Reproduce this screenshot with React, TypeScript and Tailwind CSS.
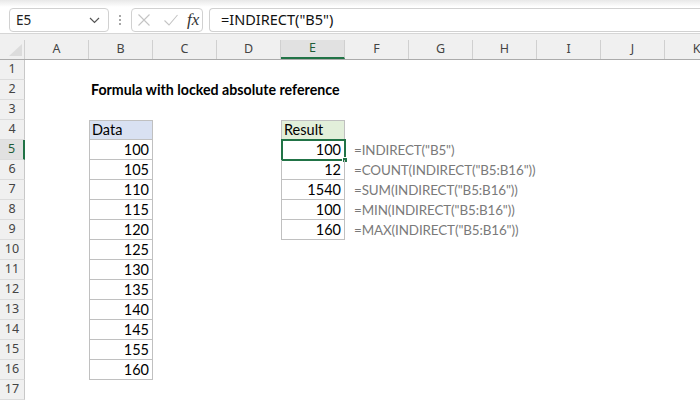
import React from "react";

const COLS = ["A", "B", "C", "D", "E", "F", "G", "H", "I", "J", "K"];
const ROWS = Array.from({ length: 17 }, (_, i) => i + 1);

type Cell = { text: string; kind: "num" | "head" | "title" | "formula"; tone?: "blue" | "green" };

const DATA = [100, 105, 110, 115, 120, 125, 130, 135, 140, 145, 155, 160];

const CELLS: Record<string, Cell> = {
  B2: { text: "Formula with locked absolute reference", kind: "title" },
  B4: { text: "Data", kind: "head", tone: "blue" },
  E4: { text: "Result", kind: "head", tone: "green" },
  E5: { text: "100", kind: "num" },
  E6: { text: "12", kind: "num" },
  E7: { text: "1540", kind: "num" },
  E8: { text: "100", kind: "num" },
  E9: { text: "160", kind: "num" },
  F5: { text: '=INDIRECT("B5")', kind: "formula" },
  F6: { text: '=COUNT(INDIRECT("B5:B16"))', kind: "formula" },
  F7: { text: '=SUM(INDIRECT("B5:B16"))', kind: "formula" },
  F8: { text: '=MIN(INDIRECT("B5:B16"))', kind: "formula" },
  F9: { text: '=MAX(INDIRECT("B5:B16"))', kind: "formula" },
};
DATA.forEach((v, i) => {
  CELLS[`B${i + 5}`] = { text: String(v), kind: "num" };
});

function inTable(col: string, row: number) {
  return (col === "B" && row >= 4 && row <= 16) || (col === "E" && row >= 4 && row <= 9);
}

function SheetCell({ col, row }: { col: string; row: number }) {
  const cell = CELLS[`${col}${row}`];
  const table = inTable(col, row);
  const selected = col === "E" && row === 5;
  return (
    <div
      className={`relative h-5 w-16 shrink-0 ${table ? "border-x border-b border-[#c0c0c0]" : ""} ${
        table && row === 4 ? "border-t" : ""
      } ${cell?.tone === "blue" ? "bg-[#d9e1f2]" : cell?.tone === "green" ? "bg-[#e2efda]" : ""}`}
    >
      {cell && (
        <div
          className={`absolute inset-y-0 whitespace-nowrap leading-[20px] ${
            cell.kind === "num"
              ? "right-[3px] text-[14.5px] text-black"
              : cell.kind === "head"
              ? "left-[2px] text-[14.5px] text-black"
              : cell.kind === "title"
              ? "left-[2px] text-[14.2px] font-bold text-black"
              : "left-[9px] text-[13.4px] tracking-[-0.1px] text-[#7a7a7a]"
          }`}
          style={{ top: table && row === 4 ? -1 : 0 }}
        >
          {cell.text}
        </div>
      )}
      {selected && (
        <div className="absolute -left-px -top-px -right-[2px] -bottom-[2px] border-2 border-[#217346]">
          <div className="absolute -bottom-[4px] -right-[4px] h-[6px] w-[6px] border border-white bg-[#217346]" />
        </div>
      )}
    </div>
  );
}

function FormulaBar() {
  return (
    <div className="relative h-[33px] bg-white">
      <div className="absolute inset-x-0 top-0 h-[7px] bg-gradient-to-b from-[#e8e8e8] to-white" />
      <div className="relative flex h-full items-start pt-[8px]">
        <div className="ml-[9px] flex h-[24px] w-[100px] items-center justify-between rounded-[4px] border border-[#d1d1d1] bg-white pl-[6px] pr-[8px]">
          <span className="text-[13.5px] text-[#222]">E5</span>
          <svg width="11" height="7" viewBox="0 0 11 7" fill="none">
            <path d="M1 1l4.5 4.5L10 1" stroke="#555" strokeWidth="1.2" />
          </svg>
        </div>
        <div className="flex h-[24px] w-[22px] flex-col items-center justify-center gap-[2px]">
          <span className="h-[2px] w-[2px] rounded-full bg-[#8a8a8a]" />
          <span className="h-[2px] w-[2px] rounded-full bg-[#8a8a8a]" />
          <span className="h-[2px] w-[2px] rounded-full bg-[#8a8a8a]" />
        </div>
        <div className="flex h-[24px] w-[72px] items-center rounded-[4px] border border-[#d1d1d1] bg-white pl-[5px]">
          <svg width="14" height="14" viewBox="0 0 14 14" fill="none">
            <path d="M1.5 1.5l11 11M12.5 1.5l-11 11" stroke="#c4c4c4" strokeWidth="1.1" />
          </svg>
          <svg width="16" height="14" viewBox="0 0 16 14" fill="none" className="ml-[12px]">
            <path d="M1.5 7.5l4.5 4.5L14.5 2" stroke="#c4c4c4" strokeWidth="1.1" />
          </svg>
          <span className="ml-[8px] text-[17px] italic text-[#333]" style={{ fontFamily: '"Liberation Serif", serif' }}>
            fx
          </span>
        </div>
        <div className="ml-[6px] flex h-[24px] flex-1 items-center rounded-l-[4px] border border-r-0 border-[#d1d1d1] bg-white pl-[11px]">
          <span className="text-[14.5px] text-[#111]">=INDIRECT("B5")</span>
        </div>
      </div>
    </div>
  );
}

export default function App() {
  return (
    <div
      className="h-[400px] w-[700px] overflow-hidden bg-white"
      style={{ fontFamily: '"Noto Sans", "Open Sans", sans-serif' }}
    >
      <FormulaBar />
      <div className="h-[7px] border-t border-[#d6d6d6] bg-[#f0f0f0]" />
      <div className="flex h-[20px] border-b border-[#ababab] bg-[#f0f0f0]">
        <div className="relative w-[25px] shrink-0 border-r border-[#d0d0d0]">
          <svg className="absolute bottom-[3px] right-[2px]" width="13" height="12" viewBox="0 0 13 12">
            <path d="M13 0V12H0Z" fill="#dcdcdc" />
          </svg>
        </div>
        {COLS.map((c) => (
          <div
            key={c}
            className={`flex h-full w-16 shrink-0 items-center justify-center border-r border-[#d0d0d0] text-[12.5px] ${
              c === "E" ? "border-b-2 border-b-[#217346] bg-[#e1e1e1] text-[#1e5c38]" : "text-[#444]"
            }`}
          >
            {c}
          </div>
        ))}
      </div>
      <div style={{ fontFamily: 'Lato, "Liberation Sans", sans-serif' }}>
        {ROWS.map((r) => (
          <div key={r} className="flex h-5">
            <div
              className={`flex h-5 w-[25px] shrink-0 items-center justify-center border-b border-[#dcdcdc] text-[12.5px] ${
                r === 5
                  ? "border-r-2 border-r-[#217346] bg-[#e1e1e1] text-[#1e5c38]"
                  : "border-r border-r-[#c8c8c8] bg-[#f0f0f0] text-[#444]"
              }`}
              style={{ fontFamily: '"Noto Sans", sans-serif' }}
            >
              {r}
            </div>
            {COLS.map((c) => (
              <SheetCell key={c} col={c} row={r} />
            ))}
          </div>
        ))}
      </div>
    </div>
  );
}
